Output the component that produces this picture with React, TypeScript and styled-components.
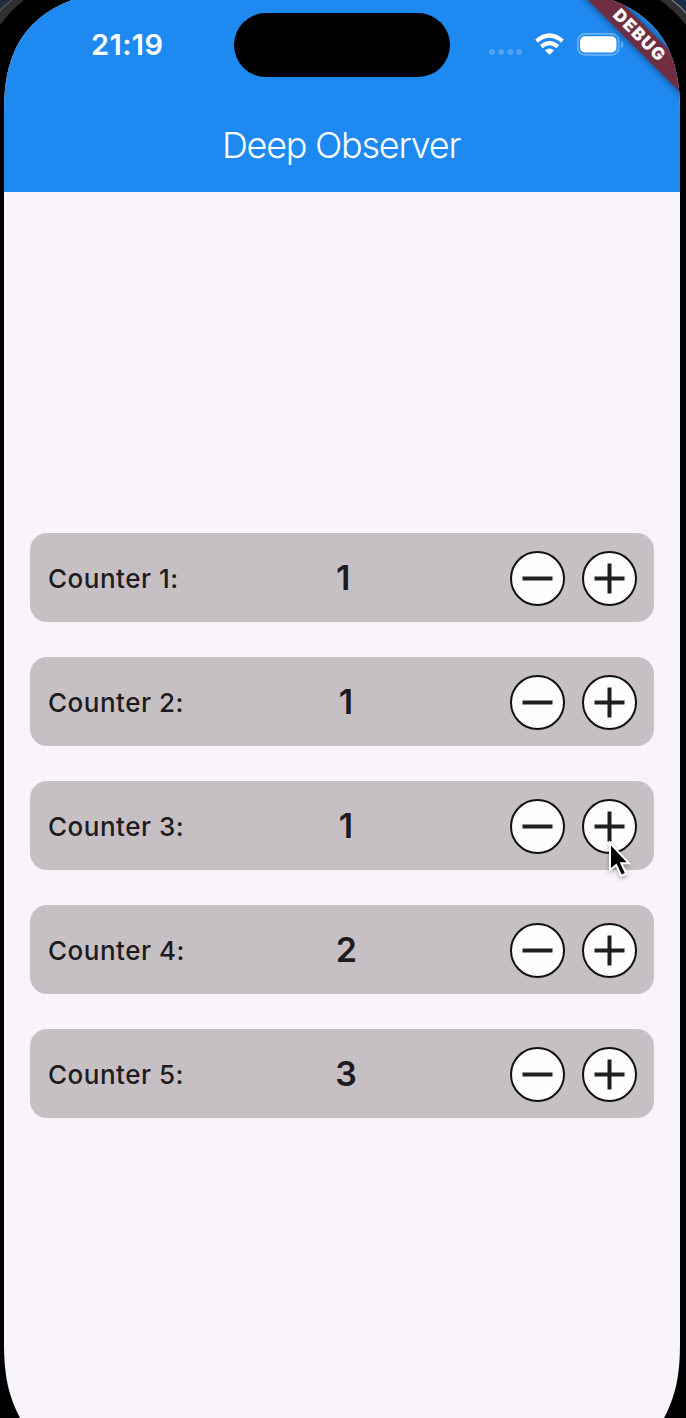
import React, { useState } from "react";
import styled, { createGlobalStyle } from "styled-components";

const GlobalStyle = createGlobalStyle`
  * { box-sizing: border-box; }
  html, body { margin: 0; padding: 0; background: #000; overflow: hidden; }
  body { font-family: Inter, "Liberation Sans", sans-serif; }
`;

const Device = styled.div`
  position: relative;
  width: 686px;
  height: 1418px;
  background: #000;
  overflow: hidden;
`;

const Bezel = styled.svg`
  position: absolute;
  inset: 0;
`;

const Screen = styled.div`
  position: relative;
  display: flex;
  flex-direction: column;
  height: 1418px;
  background: #f9f3fb;
  clip-path: path("M4 110C4 62 18 20 72 0H612C666 20 680 62 680 110V1342C680 1375 676 1395 664 1418H20C8 1395 4 1375 4 1342Z");
`;

const Header = styled.header`
  height: 192px;
  flex: none;
  background: #1e89f1;
  color: #fff;
`;

const StatusBar = styled.div`
  display: grid;
  grid-template-columns: 234px 216px 1fr;
  align-items: center;
  height: 88px;
`;

const Time = styled.div`
  padding: 1px 0 0 91px;
  font-size: 29px;
  line-height: 36px;
  font-weight: 600;
  letter-spacing: 0.4px;
`;

const Island = styled.div`
  height: 64px;
  border-radius: 32px;
  background: #000;
  margin-top: 1px;
`;

const StatusIcons = styled.svg`
  display: block;
  margin-left: 34px;
`;

const Title = styled.h1`
  margin: 34px 0 0;
  padding-right: 4px;
  text-align: center;
  font-size: 36px;
  line-height: 46px;
  font-weight: 350;
  letter-spacing: -1.25px;
`;

const List = styled.main`
  display: flex;
  flex-direction: column;
  gap: 35px;
  padding: 341px 32px 0 30px;
`;

const Row = styled.div`
  display: flex;
  align-items: center;
  justify-content: space-between;
  height: 89px;
  padding: 0 17px;
  border-radius: 17px;
  background: #c6c0c4;
  color: #1d1b20;
`;

const Label = styled.span`
  margin: 2px -2px 0 1px;
  font-size: 26px;
  font-weight: 460;
  letter-spacing: 0.5px;
`;

const Value = styled.span`
  font-size: 34px;
  font-weight: 600;
`;

const Actions = styled.div`
  display: flex;
  gap: 17px;
  margin-top: 1px;
`;

const RoundButton = styled.button`
  display: grid;
  place-items: center;
  width: 55px;
  height: 55px;
  padding: 0;
  border: 2px solid #111;
  border-radius: 50%;
  background: #fdfdfd;
`;

const DebugBanner = styled.svg`
  position: absolute;
  top: 0;
  right: 0;
`;

const Pointer = styled.svg`
  position: absolute;
  left: 603px;
  top: 836px;
  pointer-events: none;
`;

function Sign({ plus }: { plus?: boolean }) {
  return (
    <svg width="31" height="31" viewBox="0 0 31 31" stroke="#1d1f20" strokeWidth="4">
      <path d={plus ? "M.5 15.5H30.5M15.5 .5V30.5" : "M.5 15.5H30.5"} />
    </svg>
  );
}

export default function App() {
  const [counts, setCounts] = useState([1, 1, 1, 2, 3]);
  const change = (index: number, by: number) =>
    setCounts((all) => all.map((n, i) => (i === index ? n + by : n)));

  return (
    <>
      <GlobalStyle />
      <Device>
        <Bezel width="686" height="1418">
          <path d="M0 0H24Q11 10 0 25Z" fill="#303030" />
          <path d="M0 0H13Q6 5 0 12Z" fill="#55565a" />
          <path d="M0 0H11Q5 4 0 10Z" fill="#252c40" />
          <path d="M686 0H660Q674 10 686 25Z" fill="#303030" />
          <path d="M686 0H671Q679 6 686 14Z" fill="#77787c" />
          <path d="M686 0H673Q680 5 686 12Z" fill="#182b48" />
        </Bezel>
        <Screen>
          <Header>
            <StatusBar>
              <Time>21:19</Time>
              <Island />
              <StatusIcons width="144" height="40" viewBox="484 24 144 40">
                <g fill="#fff" fillOpacity=".22">
                  <circle cx="492" cy="52" r="3" />
                  <circle cx="501.3" cy="52" r="3" />
                  <circle cx="510.3" cy="52" r="3" />
                  <circle cx="519.3" cy="52" r="3" />
                </g>
                <g fill="none" stroke="#fff" strokeWidth="4.2">
                  <path d="M536.6 41.2Q549.5 29.9 562.4 41.2" />
                  <path d="M541.3 46.6Q549.5 39.6 557.7 46.6" />
                </g>
                <path d="M545 50.3Q549.5 46.8 554 50.3L549.5 55Z" fill="#fff" />
                <rect x="577.8" y="33.8" width="41" height="21" rx="7" fill="none" stroke="#fff" strokeOpacity=".35" strokeWidth="1.7" />
                <rect x="580" y="36.2" width="36.5" height="16.3" rx="5" fill="#fff" />
                <path d="M621 41Q623.5 42 623.5 44.5T621 48Z" fill="#fff" fillOpacity=".35" />
              </StatusIcons>
            </StatusBar>
            <Title>Deep Observer</Title>
          </Header>
          <List>
            {counts.map((count, i) => (
              <Row key={i}>
                <Label>Counter {i + 1}:</Label>
                <Value>{count}</Value>
                <Actions>
                  <RoundButton aria-label="Decrease" onClick={() => change(i, -1)}>
                    <Sign />
                  </RoundButton>
                  <RoundButton aria-label="Increase" onClick={() => change(i, 1)}>
                    <Sign plus />
                  </RoundButton>
                </Actions>
              </Row>
            ))}
          </List>
          <DebugBanner width="126" height="120" viewBox="560 0 126 120">
            <defs>
              <filter id="ribbon" x="-20%" y="-20%" width="140%" height="140%">
                <feDropShadow dx="0" dy="0" stdDeviation="4" floodColor="#000" floodOpacity=".55" />
              </filter>
            </defs>
            <path d="M567 -21H598L706 87V118Z" fill="#702d42" filter="url(#ribbon)" />
            <text
              transform="translate(639.5 35) rotate(45)"
              x="0.5"
              y="6"
              textAnchor="middle"
              fill="#fff"
              fontFamily="Inter, sans-serif"
              fontSize="17"
              fontWeight="900"
              letterSpacing="1.5"
            >
              DEBUG
            </text>
          </DebugBanner>
        </Screen>
        <Pointer width="34" height="46" viewBox="603 836 34 46">
          <path
            d="M610 843V870L616.2 865L621.2 876L626.2 873.5L621.3 863.3H629Z"
            fill="#000"
            stroke="#fff"
            strokeWidth="2"
            style={{ filter: "drop-shadow(0 2px 2px rgba(0,0,0,.3))" }}
          />
        </Pointer>
      </Device>
    </>
  );
}
